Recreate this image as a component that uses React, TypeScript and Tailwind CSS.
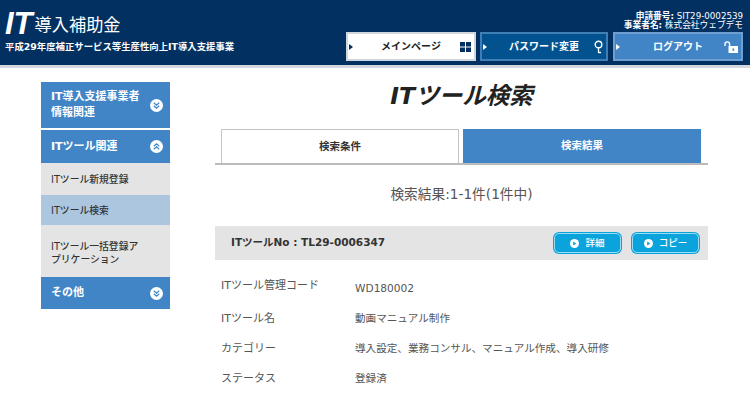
const FONT = "font-['DejaVu_Sans','Noto_Sans_CJK_JP',sans-serif]";

function Chevrons({ up }: { up?: boolean }) {
  return (
    <svg width="13" height="13" viewBox="0 0 13 13" className="shrink-0">
      <circle cx="6.5" cy="6.5" r="6.5" fill="#fff" />
      <path
        d={up ? "M3.8 6.2 6.5 3.8 9.2 6.2M3.8 9.2 6.5 6.8 9.2 9.2" : "M3.8 3.8 6.5 6.2 9.2 3.8M3.8 6.8 6.5 9.2 9.2 6.8"}
        fill="none"
        stroke="#4285c6"
        strokeWidth="1.2"
      />
    </svg>
  );
}

function Arrow({ color }: { color: string }) {
  return (
    <svg width="4" height="6" viewBox="0 0 4 6" className="absolute left-[1px] top-[10px]">
      <path d="M0 0 4 3 0 6Z" fill={color} />
    </svg>
  );
}

function Grid() {
  return (
    <svg width="11" height="10" viewBox="0 0 11 10">
      <path d="M0 0h5v4.5H0zM6 0h5v4.5H6zM0 5.5h5V10H0zM6 5.5h5V10H6z" fill="#023061" />
    </svg>
  );
}

function Key() {
  return (
    <svg width="9" height="14" viewBox="0 0 9 14">
      <circle cx="4.5" cy="4.5" r="3.3" fill="none" stroke="#fff" strokeWidth="1.4" />
      <path d="M4.5 8v5M4.5 12.5H7" stroke="#fff" strokeWidth="1.3" fill="none" />
    </svg>
  );
}

function Unlock() {
  return (
    <svg width="14" height="12" viewBox="0 0 14 12">
      <path d="M1 5V3.2a2.3 2.3 0 0 1 4.6 0V6" fill="none" stroke="#fff" strokeWidth="1.4" />
      <rect x="4.5" y="5" width="9.5" height="7" fill="#fff" />
      <rect x="8.5" y="7.4" width="1.6" height="2.4" fill="#4285c6" />
    </svg>
  );
}

function PlayDot() {
  return (
    <svg width="9" height="9" viewBox="0 0 9 9" className="shrink-0">
      <circle cx="4.5" cy="4.5" r="4.5" fill="#fff" />
      <path d="M3.2 2.6 6.4 4.5 3.2 6.4Z" fill="#0ba3dc" />
    </svg>
  );
}

function NavButton({ label, className, arrow, icon }: { label: string; className: string; arrow: string; icon: React.ReactNode }) {
  return (
    <div className={`relative flex h-[29px] items-center justify-center border-2 text-[10px] font-bold ${className}`}>
      <Arrow color={arrow} />
      <span>{label}</span>
      <span className="absolute right-[3px] top-1/2 flex -translate-y-1/2 items-center">{icon}</span>
    </div>
  );
}

function SideHead({ label, up, className }: { label: React.ReactNode; up?: boolean; className: string }) {
  return (
    <div className={`flex items-center justify-between bg-[#4285c6] pl-[10px] pr-[7px] text-[11px] font-bold leading-[16px] text-white ${className}`}>
      <span>{label}</span>
      <Chevrons up={up} />
    </div>
  );
}

function SmallButton({ label }: { label: string }) {
  return (
    <div className="flex h-[22px] w-[69px] items-center justify-center gap-[6px] rounded-[6px] bg-[#0ba3dc] text-[9.5px] font-medium text-white outline outline-1 -outline-offset-2 outline-[#9adcf3]">
      <PlayDot />
      {label}
    </div>
  );
}

function Row({ label, value, labelClass }: { label: string; value: string; labelClass?: string }) {
  return (
    <div className="flex h-[30px] items-center text-[10.6px] text-[#555]">
      <span className={`w-[140px] pl-[6px] text-[11px] ${labelClass ?? ""}`}>{label}</span>
      <span>{value}</span>
    </div>
  );
}

export default function App() {
  return (
    <div className={`h-[415px] w-[750px] overflow-hidden bg-white ${FONT}`}>
      <header className="flex h-[68px] justify-between border-b-[3px] border-[#d4d7de] bg-[#023061] text-white">
        <div className="pl-[5px] pt-[11px]">
          <div className="flex items-end">
            <span className="font-['Liberation_Sans',sans-serif] text-[31px] font-bold italic leading-[25px]">IT</span>
            <span className="ml-[2px] text-[17.2px] leading-[21px]">導入補助金</span>
          </div>
          <div className="mt-[4px] text-[9.4px] font-bold leading-[14px]">平成29年度補正サービス等生産性向上IT導入支援事業</div>
        </div>
        <div className="flex flex-col items-end pr-[7px] pt-[12px]">
          <div className="text-right text-[8.7px] leading-[9px]">
            <div><b>申請番号:</b> SIT29-0002539</div>
            <div><b>事業者名:</b> 株式会社ウェブデモ</div>
          </div>
          <div className="mt-[2px] flex">
            <NavButton
              label="メインページ"
              arrow="#023061"
              className="w-[130px] border-[#cfd6de] bg-white text-[#222]"
              icon={<Grid />}
            />
            <NavButton
              label="パスワード変更"
              arrow="#fff"
              className="ml-[4px] w-[128px] border-[#3f7fb6] bg-[#035290]"
              icon={<Key />}
            />
            <NavButton
              label="ログアウト"
              arrow="#fff"
              className="ml-[5px] w-[130px] border-[#6f9fd0] bg-[#4285c6]"
              icon={<Unlock />}
            />
          </div>
        </div>
      </header>

      <div className="flex pl-[41px] pt-[14px]">
        <aside className="w-[129px]">
          <SideHead label={<>IT導入支援事業者<br />情報関連</>} className="h-[46px]" />
          <SideHead label="ITツール関連" up className="mt-[2px] h-[33px]" />
          <div className="bg-[#e4e4e4] text-[9.8px] font-medium leading-[13px] text-[#333]">
            <div className="flex h-[32px] items-center pl-[10px]">ITツール新規登録</div>
            <div className="flex h-[30px] items-center bg-[#adc6e0] pl-[10px]">ITツール検索</div>
            <div className="h-[52px] pl-[10px] pt-[15px]">ITツール一括登録ア<br />プリケーション</div>
          </div>
          <SideHead label="その他" className="h-[32px]" />
        </aside>

        <main className="ml-[45px] w-[493px]">
          <h1 className="text-center text-[23.5px] font-bold italic leading-[28px] text-[#222]">ITツール検索</h1>
          <div className="mt-[19px] flex gap-[4px] border-b-2 border-[#bbb] px-[6px]">
            <div className="flex h-[34px] w-[238px] items-center justify-center border-[1.5px] border-b-0 border-[#c4c4c4] text-[10.5px] font-bold text-[#333]">検索条件</div>
            <div className="flex h-[34px] w-[238px] items-center justify-center bg-[#4285c6] text-[10.5px] font-bold text-white">検索結果</div>
          </div>
          <p className="mt-[19px] text-center text-[13.7px] leading-[20px] text-[#555]">検索結果:1-1件(1件中)</p>
          <div className="mt-[22px] flex h-[34px] items-center justify-between bg-[#e4e4e4] pl-[16px] pr-[8px]">
            <span className="text-[10.5px] font-bold text-[#333]">ITツールNo : TL29-0006347</span>
            <div className="flex gap-[9px]">
              <SmallButton label="詳細" />
              <SmallButton label="コピー" />
            </div>
          </div>
          <div className="mt-[14px]">
            <Row label="ITツール管理コード" value="WD180002" labelClass="-mt-[6px]" />
            <Row label="ITツール名" value="動画マニュアル制作" />
            <Row label="カテゴリー" value="導入設定、業務コンサル、マニュアル作成、導入研修" />
            <Row label="ステータス" value="登録済" />
          </div>
        </main>
      </div>
    </div>
  );
}
